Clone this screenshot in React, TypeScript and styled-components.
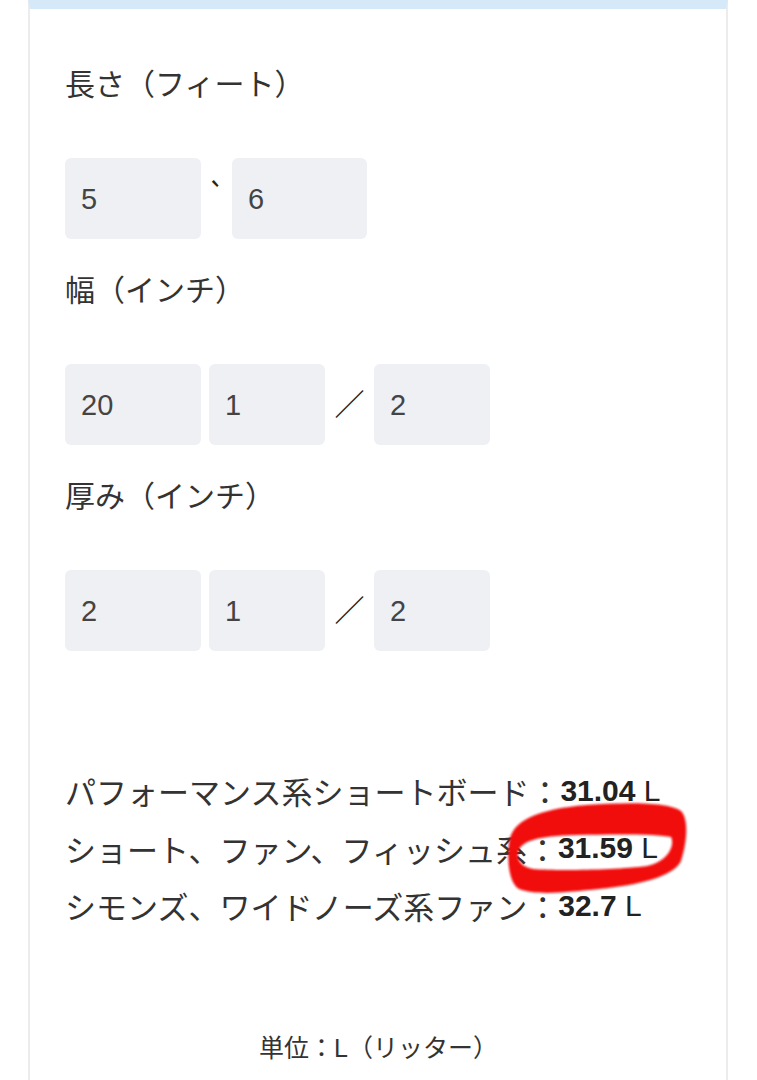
import React from "react";
import styled, { createGlobalStyle } from "styled-components";

const Global = createGlobalStyle`
  html, body { margin: 0; padding: 0; background: #ffffff; }
  body { font-family: "Liberation Sans", "Noto Sans CJK JP", sans-serif; color: #333333; }
`;

const Page = styled.div`
  padding: 0 29px 0 28px;
`;

const Card = styled.div`
  border-left: 2px solid #ececec;
  border-right: 2px solid #ececec;
  border-top: 9px solid #d6e9f9;
  padding: 52px 34px 24px 35px;
  min-height: 1100px;
  box-sizing: border-box;
`;

const Field = styled.div`
  display: flex;
  flex-direction: column;
  margin-bottom: 28px;
`;

const Label = styled.div`
  font-family: "Noto Sans CJK JP", sans-serif;
  font-size: 30px;
  line-height: 42px;
  color: #333333;
  margin-bottom: 55px;
`;

const Row = styled.div`
  display: flex;
  align-items: stretch;
  height: 81px;
`;

const Box = styled.input<{ $w: number }>`
  width: ${(p) => p.$w}px;
  height: 81px;
  box-sizing: border-box;
  border: none;
  outline: none;
  border-radius: 6px;
  background: #eff0f4;
  padding: 2px 0 0 16px;
  font-family: "Liberation Sans", sans-serif;
  font-size: 29px;
  color: #444444;
  margin: 0;
`;

const Sep = styled.span<{ $w: number; $top?: boolean }>`
  width: ${(p) => p.$w}px;
  display: flex;
  justify-content: center;
  align-items: ${(p) => (p.$top ? "flex-start" : "center")};
  font-family: "Noto Sans CJK JP", sans-serif;
  font-size: 30px;
  color: #222222;
  line-height: 1;
  padding-top: ${(p) => (p.$top ? "20px" : "0")};
  padding-bottom: ${(p) => (p.$top ? "0" : "6px")};
  box-sizing: border-box;
`;

const Gap = styled.span`
  width: 8px;
`;

const Results = styled.div`
  margin-top: 111px;
  font-family: "Noto Sans CJK JP", sans-serif;
  font-size: 31px;
  line-height: 57.5px;
  color: #333333;
`;

const ResultLine = styled.div`
  white-space: nowrap;
  height: 57.5px;
  display: flex;
  align-items: center;
`;

const Value = styled.span`
  font-family: "Liberation Sans", "Noto Sans CJK JP", sans-serif;
  font-size: 30px;
  line-height: 1;
  color: #222222;
  b { font-weight: 700; }
`;

const Marked = styled.span`
  position: relative;
  display: inline-flex;
  align-items: center;
  height: 57.5px;
`;

const Mark = styled.svg`
  position: absolute;
  left: -20px;
  top: -17px;
  width: 180px;
  height: 91px;
  pointer-events: none;
  overflow: visible;
`;

const Footer = styled.div`
  margin-top: 95px;
  text-align: center;
  font-family: "Liberation Sans", "Noto Sans CJK JP", sans-serif;
  font-size: 25px;
  line-height: 36px;
  color: #333333;
`;

function RedMark() {
  return (
    <Mark viewBox="0 0 180 91">
      <defs>
        <filter id="soft" x="-5%" y="-5%" width="110%" height="110%">
          <feGaussianBlur stdDeviation="0.8" />
        </filter>
      </defs>
      <path
        fillRule="evenodd"
        fill="#f20f0f"
        filter="url(#soft)"
        d="M2 40 C4 18 30 6 80 2 C120 -1 162 -1 174 8 C182 16 180 40 174 58 C166 74 132 82 92 86 C62 89 30 93 12 86 C2 80 0 58 2 40 Z
           M11 50 C13 38 30 33 70 32 C110 31 152 31 164 34 C168 42 162 58 140 63 C110 67 50 68 26 66 C15 64 10 58 11 50 Z"
      />
    </Mark>
  );
}

export default function App() {
  return (
    <>
      <Global />
      <Page>
        <Card>
          <Field>
            <Label>長さ（フィート）</Label>
            <Row>
              <Box $w={136} readOnly value="5" />
              <Sep $w={31} $top>`</Sep>
              <Box $w={135} readOnly value="6" />
            </Row>
          </Field>
          <Field>
            <Label>幅（インチ）</Label>
            <Row>
              <Box $w={136} readOnly value="20" />
              <Gap />
              <Box $w={116} readOnly value="1" />
              <Sep $w={49}>／</Sep>
              <Box $w={116} readOnly value="2" />
            </Row>
          </Field>
          <Field>
            <Label>厚み（インチ）</Label>
            <Row>
              <Box $w={136} readOnly value="2" />
              <Gap />
              <Box $w={116} readOnly value="1" />
              <Sep $w={49}>／</Sep>
              <Box $w={116} readOnly value="2" />
            </Row>
          </Field>
          <Results>
            <ResultLine>
              パフォーマンス系ショートボード：<Value><b>31.04</b> L</Value>
            </ResultLine>
            <ResultLine>
              ショート、ファン、フィッシュ系
              <Marked>
                ：<Value><b>31.59</b> L</Value>
                <RedMark />
              </Marked>
            </ResultLine>
            <ResultLine>
              シモンズ、ワイドノーズ系ファン：<Value><b>32.7</b> L</Value>
            </ResultLine>
          </Results>
          <Footer>単位：L（リッター）</Footer>
        </Card>
      </Page>
    </>
  );
}
